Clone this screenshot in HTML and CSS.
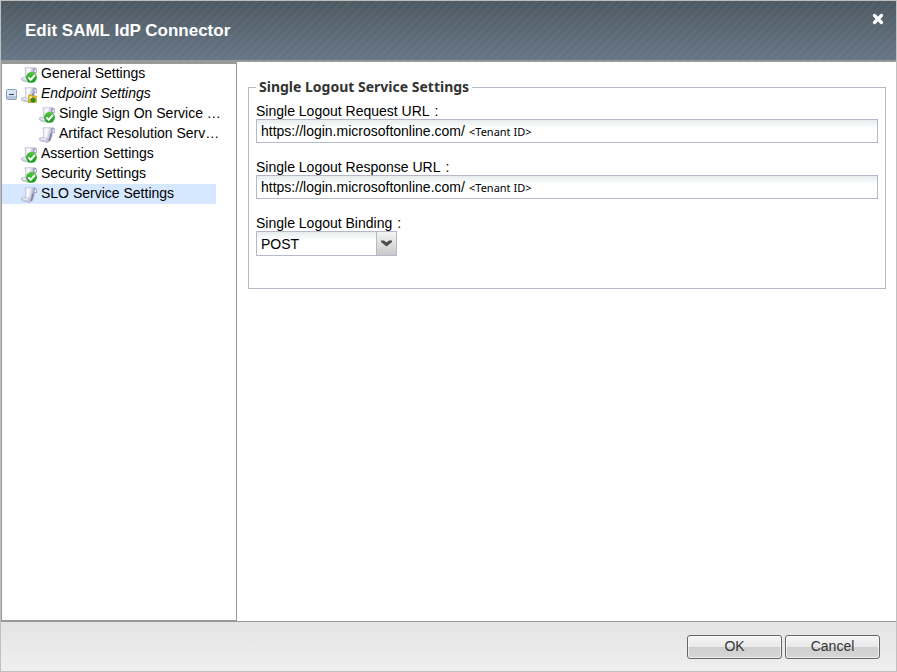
FILE: index.html
```html
<!DOCTYPE html>
<html lang="en">
<head>
    <meta charset="UTF-8">
    <meta name="viewport" content="width=device-width, initial-scale=1.0">
    <title>Edit SAML IdP Connector</title>
    <link rel="stylesheet" href="styles.css">
</head>
<body>
    <!-- shared icon shapes -->
    <svg class="defs" width="0" height="0" aria-hidden="true">
        <defs>
            <linearGradient id="paper" x1="0" y1="0" x2="1" y2="0.3">
                <stop offset="0" stop-color="#e4e4f0"/>
                <stop offset="0.5" stop-color="#fbfbff"/>
                <stop offset="1" stop-color="#a4a4c2"/>
            </linearGradient>
            <linearGradient id="green" x1="0" y1="0" x2="0" y2="1">
                <stop offset="0" stop-color="#5cc64a"/>
                <stop offset="1" stop-color="#149a1c"/>
            </linearGradient>
            <symbol id="scroll" viewBox="0 0 16 16">
                <path d="M4 0.800h9.500v5c-.3 3-1 5.500-2.500 8.200h-8c1.500-3 2.500-8 1-13.200z" fill="url(#paper)" stroke="#b9b9d0" stroke-width="0.800"/>
                <path d="M12 6v-3.500c0-2.300 3.800-2.300 3.800 0v3.500z" fill="#a2a2c2"/>
                <path d="M13.600 5v-2c0-1 1.300-1 1.300 0v2z" fill="#f4f4fc"/>
                <path d="M12 6.500c-.2 3-.8 4.800-2 7.500" fill="none" stroke="#8686aa" stroke-width="1.800"/>
                <path d="M1.500 10.500l6 .8c1.300.8.8 2.500 2.500 3.200-.6.900-1.500 1-2.500.8l-6-1.500c-1.700-.8-1.500-3.200 0-3.300z" fill="#cdcde0" stroke="#aaaac8" stroke-width="0.600"/>
                <path d="M2 11.600l5 .8" stroke="#fff" stroke-width="1"/>
            </symbol>
            <symbol id="check" viewBox="0 0 16 16">
                <use href="#scroll"/>
                <circle cx="10.500" cy="10.300" r="5.500" fill="url(#green)"/>
                <path d="M7.400 10.400l2.300 2.400 4.200-4.800" fill="none" stroke="#fff" stroke-width="2"/>
            </symbol>
            <symbol id="partial" viewBox="0 0 16 16">
                <use href="#scroll"/>
                <path d="M7.500 8h3l1 1h4v6.500h-8z" fill="#e8b923" stroke="#c2921a" stroke-width="0.600"/>
                <path d="M8.500 9.500h2.500v2.500h-2.500z" fill="#fff0a0"/>
                <circle cx="12" cy="13" r="2.600" fill="#2e8b1f"/>
            </symbol>
        </defs>
    </svg>

    <div class="dialog">
        <header class="dialog-header">
            <h1>Edit SAML IdP Connector</h1>
            <button type="button" class="close" aria-label="Close">
                <svg width="12" height="12" viewBox="0 0 12 12"><path d="M2.500 2.500l7 7M9.500 2.500l-7 7" stroke="#fff" stroke-width="3.300" stroke-linecap="round"/></svg>
            </button>
        </header>

        <div class="dialog-body">
            <nav class="sidebar">
                <ul class="tree">
                    <li><div class="node"><a href="#general"><svg class="icon"><use href="#check"/></svg>General Settings</a></div></li>
                    <li>
                        <div class="node">
                            <button type="button" class="toggle" aria-label="Collapse">
                                <svg width="11" height="11" viewBox="0 0 11 11"><rect x="0.500" y="0.500" width="10" height="10" rx="1" fill="#dce6f2" stroke="#8a9fbd"/><path d="M1 7h9v3h-9z" fill="#b4c5dc"/><path d="M3 5.500h5" stroke="#263f66"/></svg>
                            </button>
                            <a href="#endpoint" class="changed"><svg class="icon"><use href="#partial"/></svg>Endpoint Settings</a>
                        </div>
                        <ul class="subtree">
                            <li><div class="node"><a href="#sso"><svg class="icon"><use href="#check"/></svg>Single Sign On Service …</a></div></li>
                            <li><div class="node"><a href="#artifact"><svg class="icon"><use href="#scroll"/></svg>Artifact Resolution Serv…</a></div></li>
                        </ul>
                    </li>
                    <li><div class="node"><a href="#assertion"><svg class="icon"><use href="#check"/></svg>Assertion Settings</a></div></li>
                    <li><div class="node"><a href="#security"><svg class="icon"><use href="#check"/></svg>Security Settings</a></div></li>
                    <li><div class="node selected"><a href="#slo"><svg class="icon"><use href="#scroll"/></svg>SLO Service Settings</a></div></li>
                </ul>
            </nav>

            <main class="content">
                <form id="sloForm">
                    <fieldset>
                        <legend>Single Logout Service Settings</legend>

                        <div class="field">
                            <label for="request_url">Single Logout Request URL<span class="colon">:</span></label>
                            <div class="textbox">
                                <input type="text" id="request_url" name="request_url" value="https://login.microsoftonline.com/">
                                <span class="tenant">&lt;Tenant ID&gt;</span>
                            </div>
                        </div>

                        <div class="field">
                            <label for="response_url">Single Logout Response URL<span class="colon">:</span></label>
                            <div class="textbox">
                                <input type="text" id="response_url" name="response_url" value="https://login.microsoftonline.com/">
                                <span class="tenant">&lt;Tenant ID&gt;</span>
                            </div>
                        </div>

                        <div class="field">
                            <label for="binding">Single Logout Binding<span class="colon">:</span></label>
                            <div class="combo">
                                <select id="binding" name="binding">
                                    <option>POST</option>
                                    <option>Redirect</option>
                                </select>
                                <span class="arrow"><svg width="11" height="7" viewBox="0 0 11 7"><path d="M0 0.500h3l2.500 2 2.500-2h3v1.500l-5.500 4.500-5.500-4.500z" fill="#4c4c4c"/></svg></span>
                            </div>
                        </div>
                    </fieldset>
                </form>
            </main>
        </div>

        <footer class="dialog-footer">
            <button type="submit" form="sloForm" class="btn">OK</button>
            <button type="button" class="btn">Cancel</button>
        </footer>
    </div>
</body>
</html>
```

FILE: styles.css
```css
* {
    box-sizing: border-box;
}
body {
    margin: 0;
    font-family: "Liberation Sans", Arial, sans-serif;
    font-size: 14px;
    color: #000;
}
.defs {
    position: absolute;
}
.dialog {
    display: flex;
    flex-direction: column;
    min-height: 100vh;
    border: 1px solid #c0c0c0;
    background-color: #fff;
}

/* header */
.dialog-header {
    display: flex;
    justify-content: space-between;
    align-items: flex-start;
    height: 61px;
    padding: 0 12px 0 24px;
    border-bottom: 2px solid #999;
    background: repeating-linear-gradient(135deg, rgba(255,255,255,0.03) 0 3px, transparent 3px 6px),
        linear-gradient(#4d5961, #667686);
}
h1 {
    margin: 0;
    font-size: 17px;
    line-height: 60px;
    color: #fff;
}
.close {
    display: flex;
    margin-top: 12px;
    padding: 0;
    border: none;
    background: none;
    cursor: pointer;
}

/* tree */
.dialog-body {
    display: flex;
    flex: 1;
}
.sidebar {
    width: 236px;
    padding-right: 20px;
    border: 1px solid #999;
    border-top-width: 2px;
}
.tree, .subtree {
    margin: 0;
    padding: 0;
    list-style: none;
}
.node {
    display: flex;
    align-items: center;
    height: 20px;
    padding-left: 19px;
}
.subtree .node {
    padding-left: 37px;
}
.node a {
    display: flex;
    align-items: flex-end;
    gap: 4px;
    height: 18px;
    line-height: 20px;
    color: #000;
    text-decoration: none;
    white-space: nowrap;
}
.node .changed {
    font-style: italic;
}
.selected {
    background-color: #d5e8ff;
}
.icon {
    width: 16px;
    height: 16px;
}
.toggle {
    display: flex;
    margin-left: -15px;
    margin-right: 4px;
    padding: 0;
    border: none;
    background: none;
}

/* form */
.content {
    flex: 1;
    padding: 16px 10px 0 11px;
}
fieldset {
    margin: 0;
    padding: 7px 7px 32px;
    border: 1px solid #b5b8c8;
}
legend {
    padding: 0 3px;
    font-family: "Noto Sans", Tahoma, sans-serif;
    font-size: 14px;
    font-weight: bold;
    line-height: 18px;
    color: #333;
}
.field {
    margin-bottom: 16px;
}
.field:last-child {
    margin-bottom: 0;
}
label {
    display: block;
    line-height: 16px;
}
.colon {
    margin-left: 5px;
}
.textbox {
    display: flex;
    align-items: center;
    height: 24px;
    padding: 0 4px;
    border: 1px solid #b5b8c8;
    background: linear-gradient(#e6ebeb, #fff 8px);
}
.textbox input {
    width: 208px;
    padding: 0;
    border: none;
    outline: none;
    background: none;
    font: inherit;
}
.tenant {
    font-family: "Noto Sans", sans-serif;
    font-size: 11px;
}
.combo {
    position: relative;
    width: 141px;
}
select {
    display: block;
    width: 100%;
    height: 25px;
    padding: 0 24px 0 4px;
    border: 1px solid #b5b8c8;
    border-radius: 0;
    background: linear-gradient(#e6ebeb, #fff 8px);
    font: inherit;
    color: #000;
    appearance: none;
}
.arrow {
    position: absolute;
    top: 0;
    right: 0;
    bottom: 0;
    display: flex;
    align-items: center;
    justify-content: center;
    width: 21px;
    border: 1px solid #b5b8c8;
    background: linear-gradient(#f4f4f4, #c9c9c9);
    pointer-events: none;
}

/* footer */
.dialog-footer {
    display: flex;
    justify-content: flex-end;
    gap: 3px;
    height: 50px;
    padding: 13px 16px 0;
    border-top: 1px solid #999;
    background: linear-gradient(#e4e4e4, #efefef);
}
.btn {
    width: 95px;
    height: 24px;
    padding: 0 0 2px;
    border: 1px solid #666;
    border-radius: 3px;
    background: linear-gradient(#f6f6f6, #e8e8e8 50%, #cfcfcf 50%, #d6d6d6);
    box-shadow: inset 0 0 0 1px rgba(255,255,255,0.6);
    font: inherit;
    color: #333;
    cursor: pointer;
}
```
